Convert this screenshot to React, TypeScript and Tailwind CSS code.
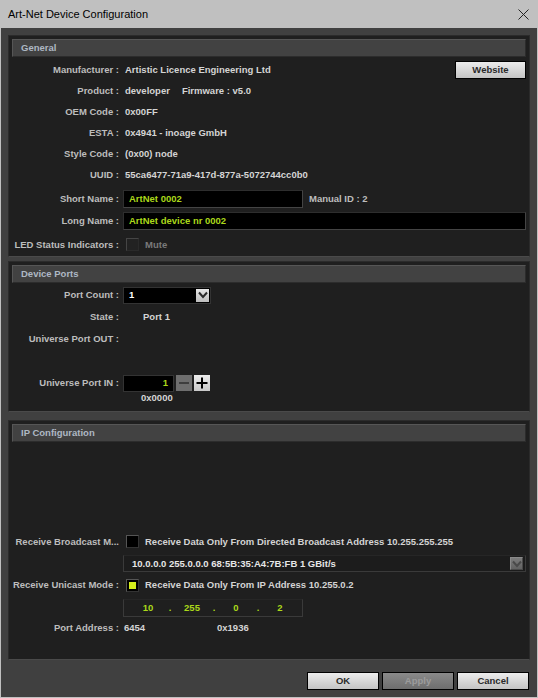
import React from 'react';

const LABEL = 'w-[110px] shrink-0 text-right text-[#bdbdbd] whitespace-nowrap';
const VALUE = 'text-[#d4d4d4] whitespace-nowrap';
const GREEN = 'text-[#abd81a]';

const Chevron = ({ color }: { color: string }) => (
  <svg width="10" height="8" viewBox="0 0 10 8">
    <path d="M1 1.5 L5 6 L9 1.5" fill="none" stroke={color} strokeWidth="2" />
  </svg>
);

const Box: React.FC<{ title: string; className?: string; children?: React.ReactNode }> = ({
  title,
  className = '',
  children,
}) => (
  <div className={`flex flex-col bg-[#1f1f1f] border border-[#2b2b2b] border-b-[#4a4a4a] ${className}`}>
    <div className="mx-[3px] mt-[3px] h-[18px] shrink-0 flex items-center pl-[8px] bg-[#424242] border border-[#565656] border-b-[#2c2c2c] border-r-[#2c2c2c] text-[#aeb8c4]">
      {title}
    </div>
    {children}
  </div>
);

const Row: React.FC<{ label: string; className?: string; children?: React.ReactNode }> = ({
  label,
  className = 'h-[21px]',
  children,
}) => (
  <div className={`flex items-center ${className}`}>
    <div className={LABEL}>{label}</div>
    <div className="ml-[4px] flex flex-1 items-center min-w-0">{children}</div>
  </div>
);

const Button: React.FC<{ children: React.ReactNode; disabled?: boolean; className?: string }> = ({
  children,
  disabled,
  className = '',
}) => (
  <div
    className={`h-[18px] flex items-center justify-center border border-black ${
      disabled
        ? 'bg-gradient-to-b from-[#8a8a8a] to-[#6e6e6e] text-[#9c9c9c]'
        : 'bg-gradient-to-b from-[#ececec] to-[#c4c4c4] text-[#2a2a2a]'
    } ${className}`}
  >
    {children}
  </div>
);

export default function App() {
  return (
    <div className="w-[538px] h-[698px] flex flex-col bg-[#c0c0c0] font-['Liberation_Sans',Arial,sans-serif] text-[9.5px] font-bold leading-[12px]">
      <div className="h-[28px] shrink-0 flex items-center justify-between pl-[8px] pr-[9px] text-[11px] font-normal text-black">
        <span>Art-Net Device Configuration</span>
        <svg width="11" height="11" viewBox="0 0 11 11">
          <path d="M0.5 0.5 L10.5 10.5 M10.5 0.5 L0.5 10.5" stroke="#222" strokeWidth="1" />
        </svg>
      </div>

      <div className="flex-1 flex flex-col mx-[1px] mb-[1px] bg-[#404040] pt-[7px] px-[7px] pb-[7px]">
        {/* General */}
        <Box title="General" className="h-[222px] shrink-0">
          <div className="mt-[2px] flex flex-col">
            <Row label="Manufacturer :">
              <span className={`pl-[2px] ${VALUE}`}>Artistic Licence Engineering Ltd</span>
              <Button className="ml-auto mr-[3px] w-[71px]">Website</Button>
            </Row>
            <Row label="Product :">
              <span className={`pl-[2px] ${VALUE}`}>developer</span>
              <span className={`ml-[12px] ${VALUE}`}>Firmware : v5.0</span>
            </Row>
            <Row label="OEM Code :">
              <span className={`pl-[2px] ${VALUE}`}>0x00FF</span>
            </Row>
            <Row label="ESTA :">
              <span className={`pl-[2px] ${VALUE}`}>0x4941 - inoage GmbH</span>
            </Row>
            <Row label="Style Code :">
              <span className={`pl-[2px] ${VALUE}`}>(0x00) node</span>
            </Row>
            <Row label="UUID :">
              <span className={`pl-[2px] ${VALUE}`}>55ca6477-71a9-417d-877a-5072744cc0b0</span>
            </Row>
            <Row label="Short Name :" className="h-[18px] mt-[5px]">
              <div className={`w-[180px] h-[18px] flex items-center pl-[5px] bg-black border border-[#2e2e2e] border-b-[#444] border-r-[#444] ${GREEN}`}>
                ArtNet 0002
              </div>
              <span className="ml-[6px] text-[#bdbdbd]">Manual ID : 2</span>
            </Row>
            <Row label="Long Name :" className="h-[18px] mt-[4px]">
              <div className={`flex-1 mr-[3px] h-[18px] flex items-center pl-[5px] bg-black border border-[#2e2e2e] border-b-[#444] border-r-[#444] ${GREEN}`}>
                ArtNet device nr 0002
              </div>
            </Row>
            <Row label="LED Status Indicators :" className="h-[21px] mt-[4px]">
              <div className="ml-[3px] w-[13px] h-[13px] bg-[#222] border border-[#454545] border-b-[#2a2a2a] border-r-[#2a2a2a]" />
              <span className="ml-[6px] text-[#7a7a7a]">Mute</span>
            </Row>
          </div>
        </Box>

        {/* Device Ports */}
        <Box title="Device Ports" className="h-[151px] shrink-0 mt-[4px]">
          <div className="mt-[1px] flex flex-col">
            <Row label="Port Count :" className="h-[22px]">
              <div className="w-[88px] h-[17px] flex items-center justify-between pl-[5px] pr-[1px] bg-black border border-[#333] text-white">
                <span>1</span>
                <div className="w-[13px] h-[13px] flex items-center justify-center bg-gradient-to-b from-[#e6e6e6] to-[#bdbdbd]">
                  <Chevron color="#2a2a2a" />
                </div>
              </div>
            </Row>
            <Row label="State :" className="h-[22px]">
              <span className={`pl-[20px] ${VALUE}`}>Port 1</span>
            </Row>
            <Row label="Universe Port OUT :" className="h-[22px]" />
            <Row label="Universe Port IN :" className="h-[18px] mt-[24px]">
              <div className={`w-[51px] h-[17px] flex items-center justify-end pr-[5px] bg-black border border-[#333] ${GREEN}`}>
                1
              </div>
              <div className="ml-[2px] w-[16px] h-[16px] flex items-center justify-center bg-[#6e6e6e]">
                <div className="w-[10px] h-[2px] bg-[#3e3e3e]" />
              </div>
              <div className="ml-[2px] w-[16px] h-[16px] flex items-center justify-center bg-gradient-to-b from-[#ececec] to-[#c8c8c8]">
                <svg width="12" height="12" viewBox="0 0 12 12">
                  <path d="M6 0.5 V11.5 M0.5 6 H11.5" stroke="#000" strokeWidth="2" />
                </svg>
              </div>
            </Row>
            <Row label="" className="h-[12px]">
              <span className={`pl-[18px] ${VALUE}`}>0x0000</span>
            </Row>
          </div>
        </Box>

        {/* IP Configuration */}
        <Box title="IP Configuration" className="flex-1 mt-[8px]">
          <div className="mt-[89px] flex flex-col">
            <Row label="Receive Broadcast M..." className="h-[21px]">
              <div className="ml-[3px] w-[13px] h-[13px] bg-black border border-[#555] border-b-[#333] border-r-[#333]" />
              <span className={`ml-[6px] ${VALUE}`}>
                Receive Data Only From Directed Broadcast Address 10.255.255.255
              </span>
            </Row>
            <Row label="" className="h-[17px] mt-[3px]">
              <div className="flex-1 mr-[3px] h-[17px] flex items-center justify-between pl-[8px] pr-[2px] bg-[#1c1c1c] border border-[#3a3a3a] border-t-[#262626] text-[#e6e6e6]">
                <span>10.0.0.0 255.0.0.0 68:5B:35:A4:7B:FB 1 GBit/s</span>
                <div className="w-[13px] h-[13px] flex items-center justify-center bg-gradient-to-b from-[#7c7c7c] to-[#626262] border border-[#8a8a8a] border-b-[#4a4a4a] border-r-[#4a4a4a]">
                  <Chevron color="#4a4a4a" />
                </div>
              </div>
            </Row>
            <Row label="Receive Unicast Mode :" className="h-[22px] mt-[2px]">
              <div className="ml-[3px] w-[13px] h-[13px] flex items-center justify-center bg-black border border-[#555] border-b-[#333] border-r-[#333]">
                <div className="w-[7px] h-[7px] bg-[#d4ee1c]" />
              </div>
              <span className={`ml-[6px] ${VALUE}`}>Receive Data Only From IP Address 10.255.0.2</span>
            </Row>
            <Row label="" className="h-[18px] mt-[3px]">
              <div className={`w-[180px] h-[18px] flex items-center pl-[9px] border border-[#3a3a3a] border-t-[#262626] ${GREEN}`}>
                <span className="w-[30px] text-center">10</span>
                <span className="w-[14px] text-center">.</span>
                <span className="w-[30px] text-center">255</span>
                <span className="w-[14px] text-center">.</span>
                <span className="w-[30px] text-center">0</span>
                <span className="w-[14px] text-center">.</span>
                <span className="w-[30px] text-center">2</span>
              </div>
            </Row>
            <Row label="Port Address :" className="h-[20px] mt-[1px]">
              <span className={`pl-[1px] w-[94px] ${VALUE}`}>6454</span>
              <span className={VALUE}>0x1936</span>
            </Row>
          </div>
        </Box>

        <div className="mt-[12px] h-[18px] shrink-0 flex justify-end gap-[3px] mr-[1px]">
          <Button className="w-[72px]">OK</Button>
          <Button className="w-[72px]" disabled>
            Apply
          </Button>
          <Button className="w-[72px]">Cancel</Button>
        </div>
      </div>
    </div>
  );
}
